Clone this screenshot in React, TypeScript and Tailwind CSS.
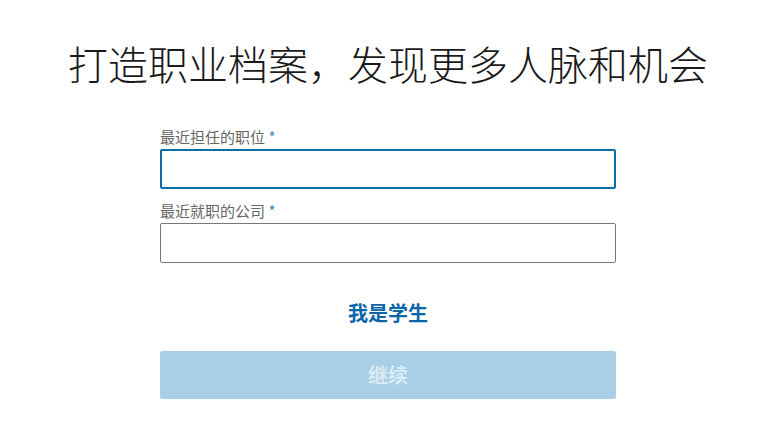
const App = () => {
  return (
    <div
      className="min-h-screen bg-white flex flex-col items-center pt-[38px] pl-[12px]"
      style={{ fontFamily: '"Noto Sans CJK SC", "Noto Sans", sans-serif' }}
    >
      {/* 标题 */}
      <h1 className="text-[40px] leading-[50px] font-light text-[#1a1a1a]">
        打造职业档案，发现更多人脉和机会
      </h1>

      <form className="w-[456px] mt-[39px] flex flex-col">
        <label className="text-[15px] leading-[20px] text-[#666] mb-[2px]">
          最近担任的职位 <span className="text-[#3d86b5]">*</span>
        </label>
        <input
          className="h-[40px] w-full rounded-[2px] border-2 border-[#0a6ea8] px-3 outline-none"
          type="text"
        />

        <label className="mt-[12px] text-[15px] leading-[20px] text-[#666] mb-[2px]">
          最近就职的公司 <span className="text-[#3d86b5]">*</span>
        </label>
        <input
          className="h-[40px] w-full rounded-[2px] border border-[#777] px-3 outline-none"
          type="text"
        />

        <button
          type="button"
          className="mt-[36px] self-center text-[20px] leading-[28px] font-bold text-[#0a66a8]"
        >
          我是学生
        </button>

        <button
          type="button"
          className="mt-[24px] h-[48px] w-full rounded-[2px] bg-[#a8cfe5] text-[20px] font-bold text-white/60"
        >
          继续
        </button>
      </form>
    </div>
  );
};

export default App;
